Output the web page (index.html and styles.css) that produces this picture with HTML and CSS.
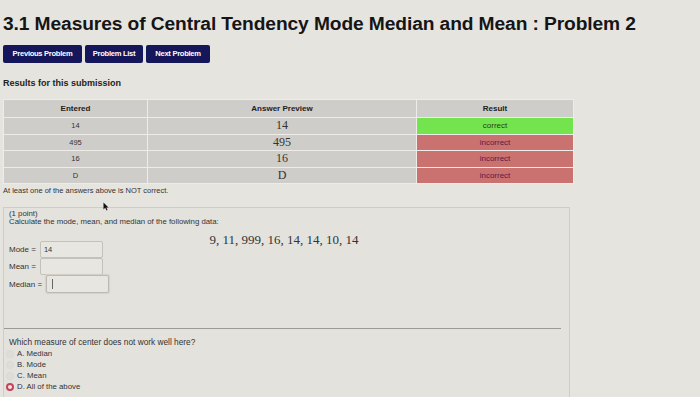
FILE: index.html
```html
<!DOCTYPE html>
<html>
<head>
<meta charset="utf-8">
<link rel="stylesheet" href="styles.css">
</head>
<body>
<div class="page">
  <h1 class="title">3.1 Measures of Central Tendency Mode Median and Mean : Problem 2</h1>
  <div class="nav">
    <span class="btn">Previous Problem</span>
    <span class="btn">Problem List</span>
    <span class="btn">Next Problem</span>
  </div>
  <div class="results-label">Results for this submission</div>
  <table class="results">
    <tr class="head">
      <th class="c-entered">Entered</th>
      <th class="c-preview">Answer Preview</th>
      <th class="c-result">Result</th>
    </tr>
    <tr>
      <td class="c-entered">14</td>
      <td class="c-preview">14</td>
      <td class="c-result ok">correct</td>
    </tr>
    <tr>
      <td class="c-entered">495</td>
      <td class="c-preview">495</td>
      <td class="c-result bad">incorrect</td>
    </tr>
    <tr>
      <td class="c-entered">16</td>
      <td class="c-preview">16</td>
      <td class="c-result bad">incorrect</td>
    </tr>
    <tr>
      <td class="c-entered">D</td>
      <td class="c-preview">D</td>
      <td class="c-result bad">incorrect</td>
    </tr>
  </table>
  <div class="notice">At least one of the answers above is NOT correct.</div>
  <div class="problem">
    <svg class="cursor" width="6" height="9" viewBox="0 0 6 9"><path d="M0.5 0.5 L0.5 7.5 L2.2 5.8 L3.5 8.5 L4.5 8 L3.3 5.4 L5.5 5.4 Z" fill="#111"/></svg>
    <div class="small">(1 point)</div>
    <div class="small">Calculate the mode, mean, and median of the following data:</div>
    <div class="data">9, 11, 999, 16, 14, 14, 10, 14</div>
    <div class="field first"><span class="lbl">Mode =</span><span class="inp">14</span></div>
    <div class="field"><span class="lbl">Mean =</span><span class="inp"></span></div>
    <div class="field"><span class="lbl">Median =</span><span class="inp focus"><span class="caret"></span></span></div>
    <div class="rule"></div>
    <div class="small q">Which measure of center does not work well here?</div>
    <div class="opt"><span class="radio"></span>A. Median</div>
    <div class="opt"><span class="radio"></span>B. Mode</div>
    <div class="opt"><span class="radio"></span>C. Mean</div>
    <div class="opt"><span class="radio on"></span>D. All of the above</div>
  </div>
</div>
</body>
</html>
```

FILE: styles.css
```css
html, body {
  margin: 0;
  padding: 0;
  background: #e6e4df;
  height: 100%;
  overflow: hidden;
}
body {
  font-family: "Liberation Sans", Arial, sans-serif;
  color: #1a1a1a;
}
.page {
  padding: 0 0 0 3px;
}
.title {
  margin: 0;
  padding-top: 13px;
  font-size: 19.2px;
  font-weight: bold;
  line-height: 22px;
  color: #151515;
  letter-spacing: -0.1px;
}
.nav {
  display: flex;
  gap: 3px;
  margin-top: 10px;
}
.btn {
  background: #16165a;
  color: #fff;
  font-size: 7.6px;
  font-weight: bold;
  height: 18px;
  line-height: 18px;
  padding: 0 5px;
  border-radius: 2px;
  letter-spacing: -0.3px;
  text-align: center;
}
.nav .btn:nth-child(1) { width: 69px; }
.nav .btn:nth-child(2) { width: 48px; }
.nav .btn:nth-child(3) { width: 54px; }
.results-label {
  margin-top: 15px;
  font-size: 9px;
  font-weight: bold;
  color: #222;
}
.results {
  margin-top: 11px;
  border-collapse: collapse;
  width: 571px;
}
.results th, .results td {
  border: 1.5px solid #eeece8;
  background: #cfcdca;
  text-align: center;
  padding: 0;
  height: 15.5px;
}
.results th {
  font-size: 8px;
  font-weight: bold;
  color: #222;
  height: 17px;
}
.c-entered { width: 143px; }
.c-preview { width: 268px; }
td.c-entered {
  font-size: 7.5px;
  color: #333;
}
td.c-preview {
  font-family: "Liberation Serif", "Times New Roman", serif;
  font-size: 12px;
  color: #333;
}
td.c-result {
  font-size: 8px;
  color: #5a1a48;
}
td.ok {
  background: #74e44e;
  color: #2a3a1a;
}
td.bad {
  background: #c97270;
}
.notice {
  margin-top: 2px;
  font-size: 7.5px;
  color: #333;
}
.problem {
  position: relative;
  margin-top: 12px;
  width: 560px;
  border: 1px solid #cfcdc8;
  border-bottom: none;
  padding: 2px 0 20px 5px;
  background: #e4e2dd;
}
.cursor {
  position: absolute;
  left: 99px;
  top: -6px;
}
.small {
  font-size: 7.8px;
  line-height: 8px;
  color: #333;
}
.data {
  font-family: "Liberation Serif", "Times New Roman", serif;
  font-size: 13px;
  color: #333;
  text-align: center;
  margin: 8px 0 0 0;
  padding-right: 10px;
  line-height: 12px;
}
.field {
  display: flex;
  align-items: center;
  gap: 4px;
  margin-top: 0;
  font-size: 8px;
  color: #333;
}
.field.first {
  margin-top: -5px;
}
.lbl {
  white-space: nowrap;
}
.inp {
  width: 58px;
  height: 15px;
  border: 1px solid #c4c1bb;
  background: #e8e6e1;
  border-radius: 2px;
  font-size: 7.5px;
  line-height: 15px;
  padding-left: 3px;
  display: flex;
  align-items: center;
}
.inp.focus {
  height: 16px;
  border-color: #bdb9b2;
  box-shadow: 0 0 1px 1px #d6d2cb;
}
.field:last-of-type {
  margin-top: 1px;
}
.caret {
  display: block;
  width: 1px;
  height: 10px;
  background: #666;
  margin-left: 2px;
}
.rule {
  margin: 35px 8px 0 -5px;
  border-top: 1.5px solid #9c9a96;
}
.q {
  margin-top: 9px;
  margin-bottom: 2px;
  font-size: 8.3px;
}
.opt {
  display: flex;
  align-items: center;
  font-size: 7.8px;
  line-height: 11px;
  color: #333;
  margin-left: -3px;
}
.radio {
  width: 6px;
  height: 6px;
  border-radius: 50%;
  border: 1px solid #dcd9d3;
  background: #e0ddd8;
  margin-right: 3px;
}
.radio.on {
  border: 2px solid #c7415a;
  width: 4px;
  height: 4px;
  background: #f1e6e6;
}
```
